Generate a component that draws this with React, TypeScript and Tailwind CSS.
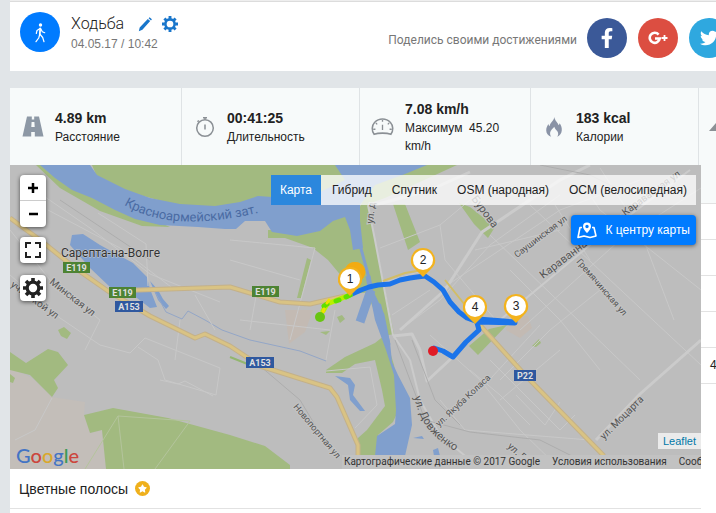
import type { ReactNode } from "react";
import { FaFacebookF, FaStar, FaTwitter } from "react-icons/fa";
import { clsx } from "clsx";

type Stat = { icon: ReactNode; value: string; label: string };

const stats: Stat[] = [
  { icon: <RoadIcon />, value: "4.89 km", label: "Расстояние" },
  { icon: <StopwatchIcon />, value: "00:41:25", label: "Длительность" },
  { icon: <GaugeIcon />, value: "7.08 km/h", label: "Максимум\u00a0 45.20 km/h" },
  { icon: <FlameIcon />, value: "183 kcal", label: "Калории" },
];

const layers = ["Карта", "Гибрид", "Спутник", "OSM (народная)", "OCM (велосипедная)"];

const splits = ["", "", "", "", "4"];

const markers = [
  { n: 1, x: 350, y: 279 },
  { n: 2, x: 423, y: 260 },
  { n: 3, x: 516, y: 306 },
  { n: 4, x: 475, y: 307 },
];

const shields = [
  { text: "E119", x: 63, y: 262, w: 27, fill: "#4d8333" },
  { text: "E119", x: 109, y: 287, w: 27, fill: "#4d8333" },
  { text: "E119", x: 252, y: 286, w: 27, fill: "#4d8333" },
  { text: "A153", x: 115, y: 301, w: 28, fill: "#2f589f" },
  { text: "A153", x: 246, y: 357, w: 28, fill: "#2f589f" },
  { text: "P22", x: 514, y: 370, w: 22, fill: "#2f589f" },
];

const streetLabels = [
  { text: "Минская ул", x: 49, y: 283, angle: 38, size: 10 },
  { text: "учинской ул", x: 10, y: 286, angle: 36, size: 10 },
  { text: "Новопортная ул", x: 293, y: 407, angle: 50, size: 9 },
  { text: "ул. д", x: 373, y: 224, angle: -84, size: 10 },
  { text: "Бурова", x: 471, y: 199, angle: 53, size: 11 },
  { text: "Саушинская ул", x: 517, y: 258, angle: -37, size: 9 },
  { text: "Караванная", x: 543, y: 279, angle: -37, size: 11 },
  { text: "Караванная ул", x: 625, y: 216, angle: -36, size: 10 },
  { text: "Гремячинская ул", x: 576, y: 262, angle: 49, size: 9 },
  { text: "ул. Якуба Коласа", x: 439, y: 427, angle: -43, size: 9 },
  { text: "ул. Моцарта", x: 604, y: 440, angle: -45, size: 10 },
  { text: "ул. Г", x: 507, y: 447, angle: 42, size: 10 },
];

function RoadIcon() {
  return (
    <svg viewBox="0 0 22 21" className="h-[21px] w-[22px]" fill="#8d98a5" aria-hidden="true">
      <path fillRule="evenodd" d="M5 .5h4.800v3h2.400v-3H17L21.500 20.500h-8.700v-4.500H9.200v4.500H.5zM9.600 6h2.800l.3 5H9.300z" />
    </svg>
  );
}

function StopwatchIcon() {
  return (
    <svg viewBox="0 0 20 22" className="h-[22px] w-[20px]" fill="none" stroke="#8b9095" strokeWidth="1.5" aria-hidden="true">
      <circle cx="10" cy="12" r="8.300" />
      <path d="M10 3.500V1.500M8 1.800h4M3.800 4.500 2.500 5.800M10 8.500v5" />
    </svg>
  );
}

function GaugeIcon() {
  return (
    <svg viewBox="0 0 26 20" className="h-[20px] w-[26px]" fill="none" stroke="#8b9095" strokeWidth="1.7" aria-hidden="true">
      <path d="M3.500 18.200C.6 14.500.6 8.600 4 5c5-5.300 13-5.300 18 0 3.400 3.600 3.400 9.500.5 13.200-5-1.700-14-1.700-19 0z" />
      <path strokeWidth="1.500" d="M13 7.500v6M13 2v2M5.500 5.500 7 7M20.500 5.500 19 7M2.500 12.500h2.500M21 12.500h2.500" />
    </svg>
  );
}

function FlameIcon() {
  return (
    <svg viewBox="0 0 16 20" className="h-[20px] w-[16px]" fill="#8a93a6" aria-hidden="true">
      <path d="M8.300 0C9 4 11.800 5.500 12.600 8.200c.6-.5.9-1.200 1-2 1.500 2 2.400 4.400 2.200 7-.2 3-2 5.500-4.600 6.600 1.200-1.600 1.300-3.400.3-5.200C10.600 13 8.800 12 8.300 9.800c-1.300 1.600-3.600 3.200-4.100 5.500-.3 1.700.1 3.200 1 4.500C2 18.700.2 16.200.2 13.200c0-2.600 1.300-4.500 2.200-6.200.2 1 .5 1.700 1.200 2.200C4 5.500 7.800 4.200 8.300 0z" />
    </svg>
  );
}

function WalkIcon() {
  return (
    <svg viewBox="0 0 12 20" className="mt-px h-[20px] w-[12px]" fill="none" stroke="#fff" strokeLinejoin="round" strokeLinecap="round" aria-hidden="true">
      <circle cx="6.500" cy="2" r="1.700" fill="#fff" stroke="none" />
      <path strokeWidth="1.800" d="M6.200 5.500 5.800 11.500" />
      <path strokeWidth="1.200" d="M6 5.500 3 7.500 2.300 10.500M6.800 5.700 8.300 8.700 10.700 9.700M5.700 11.500 4.700 15 2 18.700M6.200 11.500 8.700 14.500 10 18.700" />
    </svg>
  );
}

function PencilIcon() {
  return (
    <svg viewBox="0 0 14 15" className="h-[15px] w-[14px]" fill="currentColor" aria-hidden="true">
      <path d="M9.800 1.900 12.200 4.100 4.400 12.800.8 14.200 1.700 10.600zM10.600 1.200 11.600.3l2.300 2-.9 1.100z" />
    </svg>
  );
}

function GearIcon({ className }: { className: string }) {
  return (
    <svg viewBox="0 0 20 20" className={className} fill="none" stroke="currentColor" aria-hidden="true">
      <circle cx="10" cy="10" r="5.800" strokeWidth="3.200" />
      <path
        strokeWidth="3.600"
        d="M10 0v3.500M10 16.500V20M0 10h3.500M16.500 10H20M3 3l2.500 2.500M14.500 14.500 17 17M17 3l-2.500 2.500M5.500 14.500 3 17"
      />
    </svg>
  );
}

function MapPinIcon() {
  return (
    <svg viewBox="0 0 20 17" className="h-[17px] w-[20px]" fill="none" stroke="#fff" strokeWidth="1.600" strokeLinejoin="round" aria-hidden="true">
      <path d="M5 5.500H3L1 15.500l6-1.500 6 1.500 6-1.500-2-8.500h-2" />
      <path fill="#fff" stroke="none" fillRule="evenodd" d="M10 .5a4 4 0 0 1 4 4c0 2.800-4 6.500-4 6.500S6 7.300 6 4.500a4 4 0 0 1 4-4zm0 2.300a1.700 1.700 0 1 0 0 3.400 1.700 1.700 0 0 0 0-3.400z" />
    </svg>
  );
}

function GooglePlusIcon() {
  return (
    <svg viewBox="0 0 20 14" className="h-[14px] w-[20px]" fill="none" stroke="#fff" aria-hidden="true">
      <path strokeWidth="2.600" d="M10.600 3.600A5 5 0 1 0 11.700 7.500H7" />
      <path strokeWidth="1.800" d="M16.500 4v6M13.500 7h6" />
    </svg>
  );
}

function TrackMap() {
  return (
    <svg
      viewBox="10 165 691 304"
      preserveAspectRatio="xMinYMin slice"
      className="block h-full w-full"
      role="img"
      aria-label="Карта"
      fontFamily='Roboto, "Noto Sans", sans-serif'
    >
      <rect x="10" y="165" width="691" height="304" fill="#bdbdbd" />

      {/* Fields */}
      <path fill="#c3beb9" d="M10 368 32 378 52 397 85 402 84 415 90 433 102 430 106 469H10z" />
      <path fill="#c3bab3" d="M285 310h28l-8 22-16 12z M510 318l18-2 4 12-12 10-14-8z" />

      {/* Parks and banks */}
      <g fill="#a2ba80">
        <path d="M36 165H60L120 205 170 227 142 226 100 211 60 188z" />
        <path d="M92 165H345L350 185 322 202 295 203 272 199 240 204 215 208 180 206 125 191 97 177z" />
        <path d="M268 230 300 230 350 208 362 248 374 292 350 294 343 278 328 260 313 248 285 238 268 238z" />
        <path d="M398 176 425 165H457L385 198 368 204 376 245 384 285 394 334 384 336 366 290 356 215 372 182z" />
        <path d="M10 352 26 363 48 349 58 352 68 365 54 380 58 388 52 397 30 375 10 370z" />
        <path d="M58 330 64 327 71 333 67 339 61 336zM10 374l5 4-2 5-3-1z" />
        <path d="M84 415 113 408 168 418 230 435 265 446 290 465 290 469H106L102 430 90 433z" />
        <path d="M326 370 345 357 375 343 385 335 394 365 401 405 393 422 378 435 378 455H358V438L367 430 385 406 382 390 375 360 355 364 342 373H326z" />
        <path d="M393 204H405L420 242 408 250zM459 203 470 207 495 227 488 238 474 224zM469 346 489 329 507 325 478 355zM532 346l7-7 2 4-5 4z" />
        <path d="M307 258l4 2-10 38h-4zM337 317l5-2 3 4-5 4zM320 332l10-1-4 4z" />
      </g>

      {/* Water */}
      <g fill="#809fcd">
        <path d="M40 165H90L97 175 125 189 150 198 180 204 215 206 240 202 258 196 272 197 295 201 316 194 345 180 335 165H427L405 174 375 185 360 205 360 220 363 248 353 250 350 230 345 217 333 221 320 231 297 236 272 232 265 221 245 221 236 229 225 229 198 227 160 225 135 219 115 210 92 198 72 190 55 178z" />
        <path d="M70 245 72 235 83 234 100 245 133 263 147 277 150 289 157 307 150 308 137 298 110 287 90 268z" />
        <path d="M150 281 158 290 163 299 169 306 166 309 158 300z" />
        <path d="M371 300 381 304 390 342 392 362 398 375 410 398 412 425 405 456H375L377 436 395 424 396 410 394 375 386 350 375 320z" />
        <path d="M335 376 350 378 355 385 353 395 365 411 360 411 350 400 348 385zM413 438l9-2 2 3zM433 450l5-2 2 8h-6z" />
      </g>
      <g fill="none" stroke="#809fcd">
        <path strokeWidth="3" d="M360 245 369 278" />
        <path strokeWidth="9" d="M371 290 360 322" />
        <path strokeWidth="5" d="M368 276 371 292 382 315 388 345" />
        <path strokeWidth="1" stroke="#93a6c7" d="M154 290 166 312 182 319 188 311 205 320 222 330 250 340 300 351 326 361" />
      </g>

      {/* Streets */}
      <g fill="none" stroke="#c8c8c8" strokeWidth="1">
        <path d="M35 190 90 228 150 274 220 302M48 210 120 248 175 290M98 213 146 244 148 286M10 275 60 318 100 345 130 353 145 338 220 368 216 395 165 380 158 360 138 347" />
        <path d="M10 230 50 280 100 320 85 350M180 320 175 360M195 295 215 330M230 240 315 248 290 340M258 285 250 330M335 310 326 360M230 260 300 280M240 320 330 330" />
        <path d="M326 371 370 367 377 405 355 428M160 380 178 384 185 381 213 396" />
        <path d="M380 248 440 225 470 200M385 282 425 270M400 330 440 300 490 245 560 195M392 315 430 290M440 225 445 260 500 325M430 335 480 380 520 430 560 469M490 235 640 380M530 205 701 365" />
        <path d="M440 290 560 210 640 180M520 330 620 240 701 188M510 270 560 320 600 370M475 250 560 230M555 205 590 260M500 380 550 330 600 290M480 390 540 325M500 400 560 350M470 370 500 395 530 425M490 360 560 430 575 415M516 395 545 425 560 402" />
        <path d="M580 180 600 210 701 290M600 168 640 230 674 320M440 400 465 430 590 440M690 170 620 215M52 398 35 430 15 440" />
        <path stroke="#b4c49c" d="M85 469 118 416 190 421 155 469M118 416 124 469" />
      </g>
      <g fill="none" stroke="#cbcbcb" strokeLinejoin="round">
        <path strokeWidth="2" d="M368 205 375 240 393 335 410 360 420 400 440 435 470 460" />
        <path strokeWidth="3" d="M393 336 412 334 420 350 427 381 455 355" />
        <path strokeWidth="3" d="M375 205 430 190 470 172M400 330 445 290 482 232 560 180 590 165" />
        <path strokeWidth="3" d="M701 340 640 394 596 440" />
        <path strokeWidth="2" d="M500 320 590 245 690 170" />
      </g>
      <g fill="none" stroke="#adadad" strokeWidth="1">
        <path d="M395 340 425 420 470 432 540 440 580 460M60 200 150 260M260 366 300 400 330 450M412 340 435 400 460 425M540 165 590 175 620 190" />
      </g>

      {/* Highways */}
      <g fill="none" strokeLinejoin="round">
        <path stroke="#c4b189" strokeWidth="5" d="M10 218 40 240 75 268 108 291 230 287 280 302 310 304 345 296M108 291 150 316 195 338 205 334 230 346 260 366 330 388 337 397 358 445V456M478 323 525 375 604 456" />
        <path stroke="#d9c384" strokeWidth="3" d="M10 218 40 240 75 268 108 291 230 287 280 302 310 304 345 296M108 291 150 316 195 338 205 334 230 346 260 366 330 388 337 397 358 445V456M478 323 525 375 604 456" />
        <path stroke="#d2bd67" strokeWidth="2" d="M383 281 405 273 423 270M445 280 465 305 482 320" />
        <path stroke="#93b66f" strokeWidth="2" d="M230 357 250 365" />
      </g>

      {/* Street names */}
      <g fill="#555">
        {streetLabels.map((s) => (
          <text key={s.text} fontSize={s.size} transform={`translate(${s.x} ${s.y}) rotate(${s.angle})`} stroke="#c4c4c4" strokeWidth="2" paintOrder="stroke">
            {s.text}
          </text>
        ))}
      </g>
      <path id="river-name" fill="none" d="M124 205C160 226 205 226 266 211" />
      <text fontSize="13" fill="#4a6ba3">
        <textPath href="#river-name">Красноармейский зат.</textPath>
      </text>
      <path id="dovzhenko" fill="none" d="M414 397C420 420 428 436 460 454" />
      <text fontSize="11" fill="#555">
        <textPath href="#dovzhenko">ул. Довженко</textPath>
      </text>
      <text x="61" y="257" fontSize="12" fill="#333" stroke="#cacaca" strokeWidth="1" paintOrder="stroke">
        Сарепта-на-Волге
      </text>

      {/* Road numbers */}
      {shields.map((s) => (
        <g key={`${s.x}-${s.y}`}>
          <rect x={s.x} y={s.y} width={s.w} height="11" fill={s.fill} />
          <text x={s.x + s.w / 2} y={s.y + 9} fontSize="9" fontWeight="700" textAnchor="middle" fill="#e0e0e0">
            {s.text}
          </text>
        </g>
      ))}

      {/* Recorded track */}
      <g fill="none" strokeLinejoin="round" strokeLinecap="round">
        <path stroke="#1b74ea" strokeWidth="5" d="M352 294 361 290 369 287 378 285 390 284 400 280 410 278 417 277 425 276 434 282 443 290 450 302 459 312 467 318 478 322 515 323M478 319 515 322M476 319 479 330 466 342 453 357 443 351 434 348" />
        <path stroke="#b8f000" strokeWidth="5" d="M350 295 327 304 323 311" />
        <path stroke="#60e000" strokeWidth="5" d="M350 295 346 297M339 300 336 301M327 304 324 306" />
        <path stroke="#f0e000" strokeWidth="3" d="M329 300 327 303M324 309 323 312" />
      </g>
      <circle cx="320" cy="317" r="5" fill="#68c512" />
      <circle cx="433" cy="351" r="5" fill="#e01b26" />
      <path fill="#f2ab12" d="M355 262a10 10 0 0 1 9 15l-9 13-9-13a10 10 0 0 1 9-15z" />
      {markers.map((m) => (
        <g key={m.n} transform={`translate(${m.x} ${m.y})`}>
          <path fill="#f3b31e" d="M0-12A12 12 0 0 1 8 9L0 17-8 9A12 12 0 0 1 0-12z" />
          <circle r="10" fill="#fff" />
          <text y="4" fontSize="12" textAnchor="middle" fill="#222" fontFamily='"Liberation Sans", Arial, sans-serif'>
            {m.n}
          </text>
        </g>
      ))}
    </svg>
  );
}

function MapButton({ label, children }: { label: string; children: ReactNode }) {
  return (
    <button
      type="button"
      aria-label={label}
      className="flex size-[26px] items-center justify-center rounded bg-white text-[#222] shadow-[0_1px_4px_rgba(0,0,0,0.6)]"
    >
      {children}
    </button>
  );
}

export default function App() {
  return (
    <div className="flex min-h-screen flex-col overflow-hidden bg-[#e1e5e8] pl-[10px] font-['Liberation_Sans',Arial,sans-serif] text-[#222]">
      {/* Activity header */}
      <header className="flex h-[71px] items-start border-t border-[#eee] bg-white pl-[10px] shadow-[inset_0_1px_0_#dcdcdc]">
        <div className="mt-[11px] flex size-10 shrink-0 items-center justify-center rounded-full bg-[#007bff]">
          <WalkIcon />
        </div>
        <div className="mt-[13px] ml-[11px]">
          <div className="flex items-center">
            <h1 className="font-[Roboto,sans-serif] text-base leading-5 font-light">Ходьба</h1>
            <button type="button" aria-label="Изменить" className="ml-[14px] text-[#1976cb]">
              <PencilIcon />
            </button>
            <button type="button" aria-label="Настройки" className="ml-[10px] text-[#1976cb]">
              <GearIcon className="size-4" />
            </button>
          </div>
          <p className="mt-[2px] text-xs leading-4 text-[#777]">04.05.17 / 10:42</p>
        </div>
        <div className="mt-[17px] -mr-[13px] ml-auto flex shrink-0 items-center">
          <p className="mt-1 mr-[10px] font-[Roboto,sans-serif] text-xs text-[#777]">Поделись своими достижениями</p>
          <div className="flex gap-[11px]">
            <a href="#facebook" aria-label="Facebook" className="flex size-10 items-center justify-center rounded-full bg-[#3b5998] text-white">
              <FaFacebookF className="size-5" />
            </a>
            <a href="#google-plus" aria-label="Google+" className="flex size-10 items-center justify-center rounded-full bg-[#dc4e41] text-white">
              <GooglePlusIcon />
            </a>
            <a href="#twitter" aria-label="Twitter" className="flex size-10 items-center justify-center rounded-full bg-[#2fa8df] text-white">
              <FaTwitter className="size-[18px]" />
            </a>
          </div>
        </div>
      </header>

      {/* Stats */}
      <section className="mt-[17px] grid h-[77px] grid-cols-[172fr_178fr_171fr_168fr_17fr] bg-[#f7fafa]">
        {stats.map((stat) => (
          <div key={stat.value} className="flex min-w-0 items-center border-r border-[#dfe3e5] pl-[11px]">
            <div className="flex w-[23px] shrink-0 justify-center">{stat.icon}</div>
            <div className="min-w-0 pr-5 pl-[11px]">
              <p className="text-sm leading-5 font-bold">{stat.value}</p>
              <p className="text-xs leading-[18px]">{stat.label}</p>
            </div>
          </div>
        ))}
        <div className="flex items-center overflow-hidden pl-[10px]">
          <svg viewBox="0 0 20 8" className="h-2 w-5 shrink-0" fill="#8b9095" aria-hidden="true">
            <path d="M0 8 7 0 12 5 14 3 20 8z" />
          </svg>
        </div>
      </section>

      <main className="flex flex-1 bg-white">
        <div className="min-w-0 flex-1">
          <div className="relative h-[304px] overflow-hidden">
            <TrackMap />

            <div className="absolute top-[10px] left-[10px] flex flex-col">
              <div className="flex w-[26px] flex-col overflow-hidden rounded bg-white text-black shadow-[0_1px_4px_rgba(0,0,0,0.6)]">
                <button type="button" className="flex h-[26px] items-center justify-center border-b border-[#ccc]" aria-label="Приблизить">
                  <svg viewBox="0 0 12 12" className="size-3" stroke="currentColor" strokeWidth="2.500" aria-hidden="true"><path d="M1 6h10M6 1v10" /></svg>
                </button>
                <button type="button" className="flex h-[26px] items-center justify-center" aria-label="Отдалить">
                  <svg viewBox="0 0 12 12" className="size-3" stroke="currentColor" strokeWidth="2.500" aria-hidden="true"><path d="M2 6h9" /></svg>
                </button>
              </div>
              <div className="mt-[10px]">
                <MapButton label="На весь экран">
                  <svg viewBox="0 0 16 16" className="size-4" fill="none" stroke="currentColor" strokeWidth="2" aria-hidden="true">
                    <path d="M1 6V1h5M10 1h5v5M15 10v5h-5M6 15H1v-5" />
                  </svg>
                </MapButton>
              </div>
              <div className="mt-3">
                <MapButton label="Параметры карты">
                  <GearIcon className="size-5" />
                </MapButton>
              </div>
            </div>

            <div className="absolute top-[10px] right-[5px] flex flex-col items-end gap-[10px]">
              <div className="flex h-[30px] gap-[2px] bg-white/75 text-xs">
                {layers.map((layer, index) => (
                  <button key={layer} type="button" className={clsx("px-[9px] whitespace-nowrap", index === 0 && "bg-[#2b87dd] text-white")}>
                    {layer}
                  </button>
                ))}
              </div>
              <button type="button" className="flex h-[30px] items-center gap-[9px] rounded bg-[#007bff] px-[6px] text-xs text-white shadow-[0_1px_4px_rgba(0,0,0,0.5)]">
                <MapPinIcon />
                К центру карты
              </button>
            </div>

            <p className="absolute bottom-[2px] left-[6px] font-[Lato,sans-serif] text-xl leading-6 font-medium" aria-label="Google">
              <span className="text-[#4374c4]">G</span>
              <span className="text-[#cc463d]">o</span>
              <span className="text-[#daa82b]">o</span>
              <span className="text-[#4374c4]">g</span>
              <span className="text-[#3c9a55]">l</span>
              <span className="text-[#cc463d]">e</span>
            </p>
            <a href="#leaflet" className="absolute right-0 bottom-5 bg-white/70 px-[5px] text-[11px] leading-4 text-[#0078a8]">
              Leaflet
            </a>
            <div className="absolute bottom-0 left-[332px] flex gap-3 bg-[#c2c2c2] px-[2px] font-[Roboto,sans-serif] text-[10px] leading-[14px] whitespace-nowrap text-[#333]">
              <span>Картографические данные © 2017 Google</span>
              <a href="#terms">Условия использования</a>
              <a href="#report">Сообщить об ошибке</a>
            </div>
          </div>

          <div className="flex h-10 items-center gap-[7px] border-b border-[#e2e2e2] pl-[9px]">
            <h2 className="text-sm">Цветные полосы</h2>
            <span className="flex size-[15px] items-center justify-center rounded-full bg-[#efb01c] text-white">
              <FaStar className="size-[9px]" />
            </span>
          </div>
        </div>

        {/* Splits, cut off by the window edge */}
        <aside className="w-[15px] shrink-0 overflow-hidden">
          <table className="w-full border-collapse text-xs">
            <tbody>
              <tr className="h-[38px] border-b border-[#e2e2e2] bg-[#f7fafa]">
                <td />
              </tr>
              {splits.map((split, index) => (
                <tr key={index} className="h-9 border-b border-[#e2e2e2]">
                  <td className="pl-[9px]">{split}</td>
                </tr>
              ))}
            </tbody>
          </table>
        </aside>
      </main>
    </div>
  );
}
